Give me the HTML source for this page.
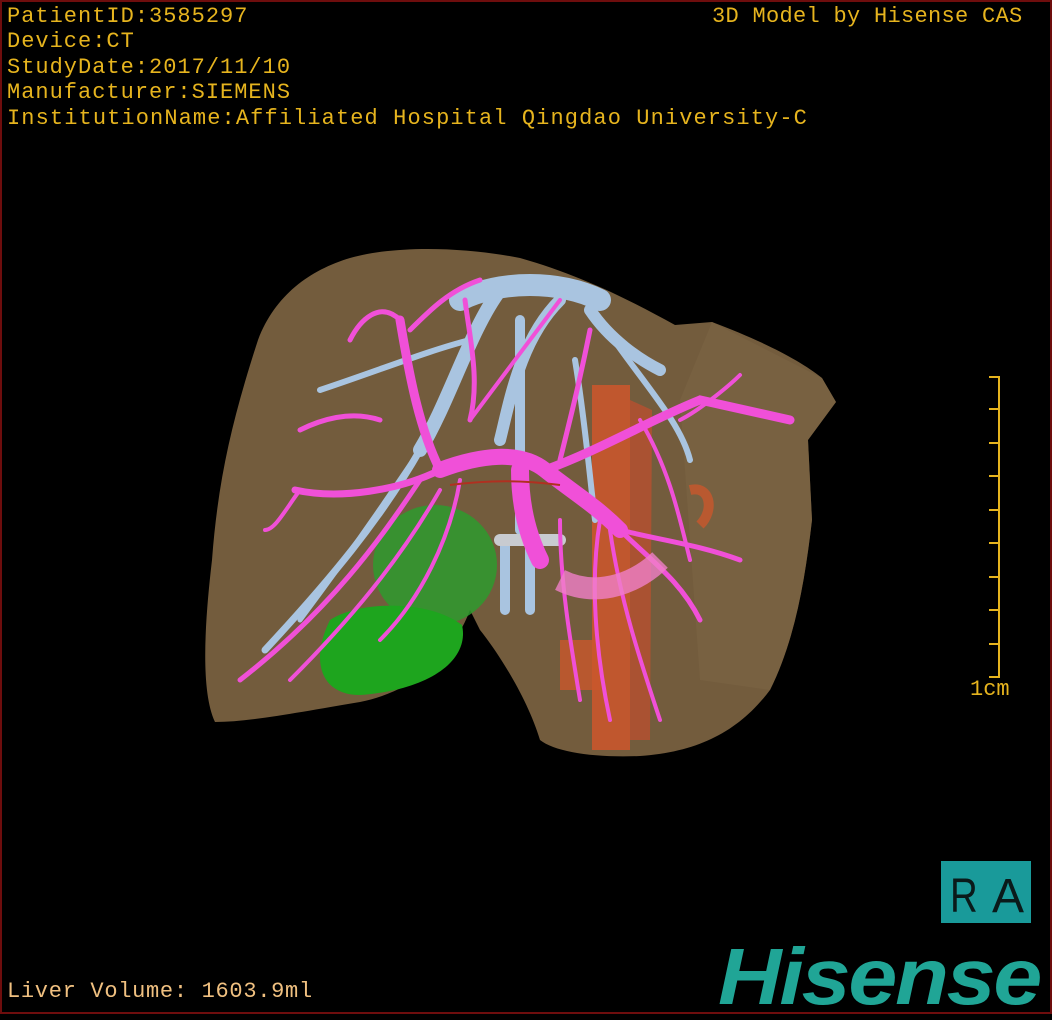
<!DOCTYPE html>
<html><head><meta charset="utf-8"><style>
html,body{margin:0;padding:0;background:#000;}
#c{position:relative;width:1052px;height:1020px;background:#000;overflow:hidden;font-family:"Liberation Sans",sans-serif;}
.fr{position:absolute;left:0;top:0;width:1048px;height:1010px;border:2px solid #6e0d0d;}
.t{position:absolute;color:#e6b41e;font-family:"Liberation Mono",monospace;font-size:22px;line-height:25px;white-space:nowrap;letter-spacing:1px;}
</style></head><body><div id="c">
<svg width="1052" height="1020" style="position:absolute;left:0;top:0">
<path d="M215,722 C200,690 205,620 212,560 C218,480 232,420 258,340 C275,295 310,270 350,258 C400,244 470,248 520,258 C580,275 630,300 675,325 L712,322 C760,340 800,360 822,378 L836,402 L808,440 L812,520 C805,580 795,640 770,690 C740,730 700,752 640,756 C595,758 555,752 540,740 C528,700 500,655 480,630 L470,610 C455,650 420,690 360,702 C300,712 250,722 215,722 Z" fill="#735c3d"/>
<path d="M712,322 L822,378 L836,402 L808,440 L812,520 C805,580 795,640 770,690 L700,680 L680,400 Z" fill="#7b6444" opacity="0.6"/>
<rect x="592" y="385" width="38" height="365" fill="#c9572c" opacity="0.9"/>
<path d="M630,400 L652,410 L650,740 L630,740 Z" fill="#b85030" opacity="0.8"/>
<path d="M560,640 L600,640 L600,690 L560,690 Z" fill="#c9572c" opacity="0.8"/>
<path d="M690,490 C710,485 715,510 700,525" stroke="#c9572c" stroke-width="10" fill="none" opacity="0.8"/>
<g stroke="#a9c4e0" fill="none" stroke-linecap="round">
<path d="M460,300 C500,280 560,280 600,300" stroke-width="22"/>
<path d="M500,290 C470,330 450,400 420,450" stroke-width="14"/>
<path d="M560,300 C520,340 510,400 500,440" stroke-width="12"/>
<path d="M590,310 C610,340 640,360 660,370" stroke-width="12"/>
<path d="M600,320 C640,380 680,420 690,460" stroke-width="6"/>
<path d="M420,450 C380,520 330,580 265,650" stroke-width="7"/>
<path d="M440,420 C400,480 360,540 300,620" stroke-width="5"/>
<path d="M320,390 C380,370 430,350 470,340" stroke-width="6"/>
<path d="M520,320 L520,530" stroke-width="10"/>
<path d="M505,540 L505,610 M530,540 L530,610" stroke-width="10"/>
<path d="M500,540 L560,540" stroke-width="12" stroke="#c8cbd0"/>
<path d="M575,360 C585,420 590,480 595,520" stroke-width="6"/>
</g>
<ellipse cx="435" cy="565" rx="62" ry="60" fill="#2e9a2e" opacity="0.85"/>
<path d="M330,620 C360,600 430,600 462,625 C470,660 430,690 360,695 C320,695 310,660 330,620 Z" fill="#1ea51e"/>
<g stroke="#f050d8" fill="none" stroke-linecap="round">
<path d="M440,470 C480,455 520,450 545,470 C570,490 595,505 620,530" stroke-width="16"/>
<path d="M520,470 C520,500 525,530 540,560" stroke-width="18"/>
<path d="M545,470 C600,450 650,420 700,400 L790,420" stroke-width="9"/>
<path d="M440,470 C420,430 410,380 400,320" stroke-width="9"/>
<path d="M440,470 C400,490 340,500 295,490" stroke-width="7"/>
<path d="M420,480 C380,540 330,610 240,680" stroke-width="5"/>
<path d="M440,490 C400,560 350,620 290,680" stroke-width="4"/>
<path d="M460,480 C450,540 420,600 380,640" stroke-width="4"/>
<path d="M620,530 C650,560 680,580 700,620" stroke-width="5"/>
<path d="M620,530 C660,540 700,545 740,560" stroke-width="5"/>
<path d="M600,520 C590,580 595,650 610,720" stroke-width="4"/>
<path d="M610,530 C620,600 640,660 660,720" stroke-width="4"/>
<path d="M560,520 C560,580 570,640 580,700" stroke-width="4"/>
<path d="M400,320 C380,300 360,320 350,340" stroke-width="5"/>
<path d="M410,330 C430,310 450,290 480,280" stroke-width="5"/>
<path d="M470,420 C480,380 470,340 465,300" stroke-width="5"/>
<path d="M470,420 C500,380 530,340 560,300" stroke-width="4"/>
<path d="M380,420 C350,410 320,420 300,430" stroke-width="5"/>
<path d="M560,460 C570,420 580,380 590,330" stroke-width="5"/>
<path d="M680,420 C700,410 730,385 740,375" stroke-width="4"/>
<path d="M640,420 C670,470 680,520 690,560" stroke-width="4"/>
<path d="M300,490 C285,510 275,530 265,530" stroke-width="4"/>
</g>
<path d="M560,580 C600,600 640,580 660,560" stroke="#f080c8" stroke-width="22" fill="none" opacity="0.8"/>
<path d="M450,485 C490,480 520,480 560,485" stroke="#b03020" stroke-width="2" fill="none"/>
<g stroke="#e6b41e" stroke-width="2">
<line x1="999" y1="376" x2="999" y2="678"/>
<line x1="989" y1="377" x2="999" y2="377"/><line x1="989" y1="409" x2="999" y2="409"/><line x1="989" y1="443" x2="999" y2="443"/><line x1="989" y1="476" x2="999" y2="476"/><line x1="989" y1="510" x2="999" y2="510"/><line x1="989" y1="543" x2="999" y2="543"/><line x1="989" y1="577" x2="999" y2="577"/><line x1="989" y1="610" x2="999" y2="610"/><line x1="989" y1="644" x2="999" y2="644"/><line x1="989" y1="677" x2="999" y2="677"/>
</g>
<rect x="941" y="861" width="90" height="62" fill="#199a9a"/>
<text x="950" y="912" font-family="Liberation Sans, sans-serif" font-size="48" fill="#0a1a1a" transform="translate(950 0) scale(0.8 1) translate(-950 0)">R</text>
<text x="992" y="912" font-family="Liberation Sans, sans-serif" font-size="48" fill="#0a1a1a">A</text>
</svg>
<div class="fr"></div>
<div class="t" style="left:7px;top:4px">PatientID:3585297</div>
<div class="t" style="left:7px;top:29px">Device:CT</div>
<div class="t" style="left:7px;top:55px">StudyDate:2017/11/10</div>
<div class="t" style="left:7px;top:80px">Manufacturer:SIEMENS</div>
<div class="t" style="left:7px;top:106px;letter-spacing:1.1px">InstitutionName:Affiliated Hospital Qingdao University-C</div>
<div class="t" style="left:712px;top:4px;letter-spacing:0.3px">3D Model by Hisense CAS</div>
<div class="t" style="left:970px;top:677px;letter-spacing:0">1cm</div>
<div class="t" style="left:7px;top:979px;color:#f0c080;letter-spacing:0.7px">Liver Volume: 1603.9ml</div>
<div style="position:absolute;left:718px;top:937px;font-size:80px;font-weight:bold;font-style:italic;color:#20a596;line-height:80px;letter-spacing:-2px;white-space:nowrap;transform:scaleX(1.1);transform-origin:left top">Hisense</div>
</div></body></html>
